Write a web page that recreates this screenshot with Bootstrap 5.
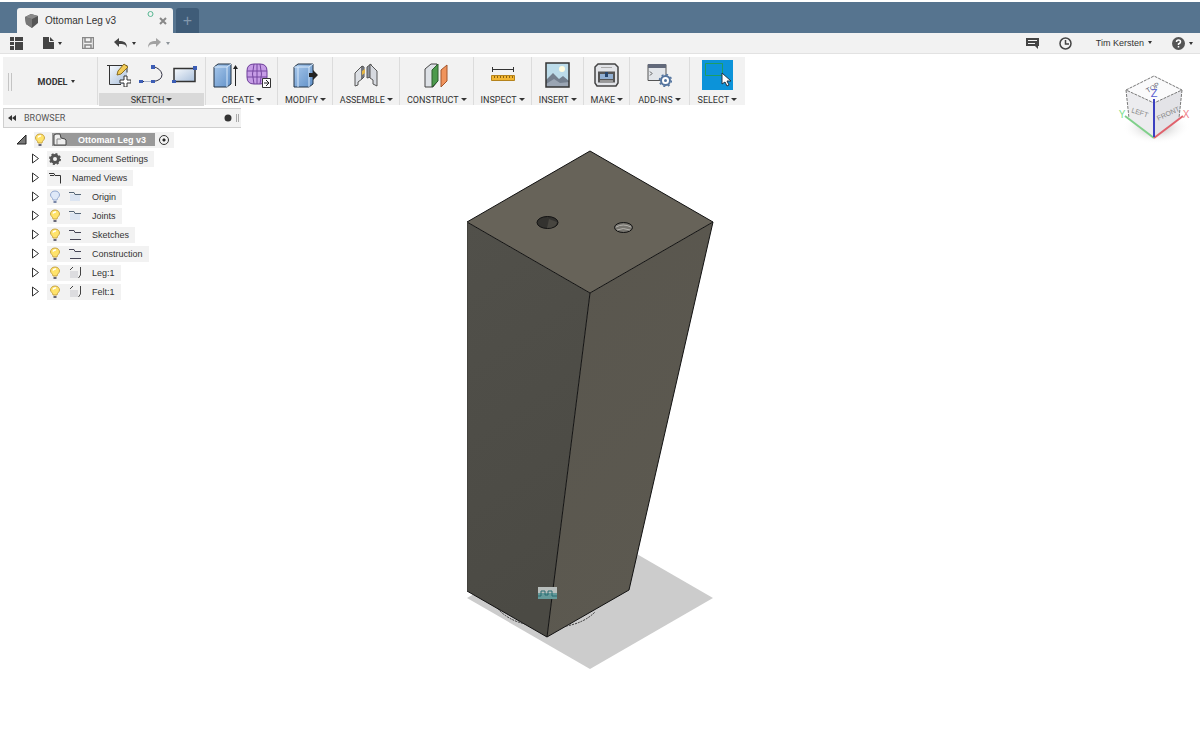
<!DOCTYPE html>
<html lang="en">
<head>
<meta charset="utf-8">
<meta name="viewport" content="width=device-width, initial-scale=1">
<title>Ottoman Leg v3</title>
<link href="https://cdn.jsdelivr.net/npm/bootstrap@5.3.0/dist/css/bootstrap.min.css" rel="stylesheet">
<style>
  body { font: 9px/12px "Liberation Sans", Arial, sans-serif; color: #333; background: #fff; }
  button { border: 0; background: none; padding: 0; color: inherit; font: inherit; }
  svg { display: block; flex: none; }
  .tabstrip { background: #56748f; height: 31px; margin-top: 2px; padding-left: 17px; gap: 3px; }
  .doc-tab { background: #f2f2f2; width: 156px; height: 25px; padding: 0 6px 0 8px; border-radius: 3px 3px 0 0; font-size: 10px; }
  .doc-name { margin-left: 6px; }
  .new-tab { background: #3f5c78; color: #8298ad; width: 23px; height: 25px; border-radius: 3px 3px 0 0; font-size: 16px; }
  .appbar { background: #f2f2f2; border-bottom: 1px solid #e2e2e2; height: 21px; padding: 0 7px 0 10px; }
  .drop::after { content: ""; display: inline-block; flex: none; border: 2px solid transparent; border-top: 3px solid currentColor; border-bottom: 0; margin-left: 4px; vertical-align: 2px; }
  .ribbon { background: #f2f2f2; margin: 3px 0 0 3px; height: 48px; font-family: Roboto, sans-serif; }
  .tool-group { border-left: 1px solid #dcdcdc; padding: 0 6px 0 7px; }
  .tool-group:nth-last-child(-n+2) { padding: 0 8px; }
  .tool-group .drop::after { border-width: 3px 3px 0; margin-left: 2px; }
  .tool-icons { height: 36px; }
  .tool-group > .drop { padding-top: 1px; }
  .tool-group.active { padding: 0 1px; }
  .tool-group.active .tool-icons { padding-left: 8px; padding-right: 7px; }
  .tool-group.active .tool-label { background: #d9d9d9; }
  .workspace { width: 94px; padding: 2px 0 0 5px; }
  .grip { width: 4px; height: 18px; border: solid #c4c4c4; border-width: 0 1px; }
  .select-tool { background: #0c93d9; width: 31px; height: 30px; }
  .browser { width: 238px; margin: 3px 0 0 3px; }
  .browser-head { height: 20px; background: #f2f2f2; border: 1px solid #cfcfcf; border-right: 0; padding: 0 1px 0 4px; color: #555; font-family: Roboto, sans-serif; }
  .tree { padding-top: 2px; }
  .tree li { height: 19px; padding-left: 28px; }
  .tree li.root { padding-left: 13px; }
  .chip { background: #f2f2f2; height: 16px; padding: 0 6px 0 2px; gap: 11px; margin-left: 7px; }
  .chip .bulb { margin-right: -3px; }
  .root .chip { gap: 6px; padding: 0 5px 0 0; }
  .root .bulb { margin: 0; }
  .root-name { background: #999; color: #fff; font-weight: bold; height: 13px; padding: 0 9px 0 1px; gap: 11px; }
  .activate { appearance: none; width: 10px; height: 10px; margin: 0 0 0 -2px; border: 1px solid #333; border-radius: 50%; background: radial-gradient(#222 0 1px, transparent 2px); }
  .viewcube { top: 16px; right: 6px; }
</style>
</head>
<body class="min-vh-100 d-flex flex-column overflow-hidden">

<svg width="0" height="0" class="position-absolute" aria-hidden="true">
  <defs>
    <linearGradient id="blue" x2="1" y2="1"><stop stop-color="#a9c9ec"/><stop offset="1" stop-color="#5f8fc7"/></linearGradient>
    <linearGradient id="steel" y2="1"><stop stop-color="#f7fafd"/><stop offset="1" stop-color="#a9bfdb"/></linearGradient>
    <symbol id="arrow" viewBox="0 0 9 11"><path d="M1.500 1v9L7.500 5.500z" fill="#fff" stroke="#333"/></symbol>
    <symbol id="bulb" viewBox="0 0 12 14"><path d="M6 1C3 1 1.500 3 1.500 5 1.500 7 4 8 4 10h4c0-2 2.500-3 2.500-5C10.500 3 9 1 6 1z" fill="#ffe36b" stroke="#c9a545"/><path d="M4 4.500Q5 2.500 7 3" stroke="#fff" stroke-width="1.500" fill="none"/><path d="M4.500 11h3v2h-3z" fill="#667"/></symbol>
    <symbol id="bulb-off" viewBox="0 0 12 14"><path d="M6 1C3 1 1.500 3 1.500 5 1.500 7 4 8 4 10h4c0-2 2.500-3 2.500-5C10.500 3 9 1 6 1z" fill="#dfe9f8" stroke="#94a9d0"/><path d="M4.500 11h3v2h-3z" fill="#7886a8"/></symbol>
    <symbol id="folder" viewBox="0 0 12 12"><path d="M1 3h10v8H1z" fill="#e9ebee"/><path d="M0 1.500h5l1 2h6M1 10.500h11" fill="none" stroke="#445"/></symbol>
    <symbol id="folder-off" viewBox="0 0 12 12"><path d="M1 3h10v7H1z" fill="#dce5f2"/><path d="M0 1.500h5l1 2h6" fill="none" stroke="#567"/></symbol>
    <symbol id="body" viewBox="0 0 12 13"><path d="M1 5h8v7H1z" fill="#dcdcdf"/><path d="M1 4l3-3M11.500 1v8l-2 3" fill="none" stroke="#444"/></symbol>
  </defs>
</svg>

<header>
  <div class="tabstrip d-flex align-items-end">
    <div class="doc-tab d-flex align-items-center">
      <svg width="14" height="14" viewBox="0 0 14 14"><path d="M0 3L6 0l7 2v7l-6 5-6-4z" fill="#555"/><path d="M0 3l7 2v9l-6-4z" fill="#777"/><path d="M0 3l6-3 7 2-6 3z" fill="#8a8a8a"/></svg>
      <span class="doc-name flex-grow-1">Ottoman Leg v3</span>
      <svg class="align-self-start" width="9" height="9"><circle cx="4.500" cy="6" r="2.500" fill="none" stroke="#58b793"/></svg>
      <button class="ms-1" aria-label="Close tab"><svg width="8" height="8"><path d="M1 1l6 6M7 1L1 7" stroke="#888" stroke-width="2"/></svg></button>
    </div>
    <button class="new-tab" aria-label="New tab">+</button>
  </div>

  <div class="appbar d-flex align-items-center">
    <button aria-label="Data panel"><svg width="13" height="13" fill="#444"><path d="M0 0h4v4H0zM5 0h8v4H5zM0 5h4v3H0zM0 9h4v4H0zM5 5h8v8H5z"/></svg></button>
    <button class="drop d-flex align-items-center ms-3 ps-1" aria-label="File"><svg width="11" height="12" fill="#444"><path d="M0 0h6v5h5v7H0zM7 0l4 4H7z"/></svg></button>
    <button class="ms-3 ps-1" aria-label="Save"><svg width="12" height="12"><path d="M.5.5h11v11H.5zM3 1v4h6V1M3 11V8h6v3" fill="none" stroke="#888" stroke-width="1.500"/></svg></button>
    <button class="drop d-flex align-items-center ms-3 ps-1" aria-label="Undo"><svg width="14" height="10"><path d="M0 4l5-4v3c5 0 8 1 8 7-1-4-4-4-8-4v3z" fill="#444"/></svg></button>
    <button class="drop d-flex align-items-center ms-2 ps-1 text-secondary opacity-75" aria-label="Redo"><svg width="14" height="10"><path d="M13 4L8 0v3C3 3 0 4 0 10c1-4 4-4 8-4v3z" fill="#888"/></svg></button>
    <div class="ms-auto d-flex align-items-center">
      <button aria-label="Comments"><svg width="13" height="11"><path d="M0 0h13v8h-1v3L9 8H0z" fill="#444"/><path d="M2 2.500h9M2 5.500h7" stroke="#f2f2f2"/></svg></button>
      <button class="ms-3 ps-1" aria-label="Job status"><svg width="13" height="13" fill="none" stroke="#444"><circle cx="6.500" cy="6.500" r="5.500" stroke-width="1.500"/><path d="M6.500 3v4H10" stroke-width="1.500"/></svg></button>
      <button class="drop ms-3 ps-2">Tim Kersten</button>
      <button class="drop d-flex align-items-center ms-3 ps-1" aria-label="Help"><svg width="13" height="13"><circle cx="6.500" cy="6.500" r="6.500" fill="#555"/><path d="M4.500 5q0-2 2-2t2 2q0 1-2 2v1M6.500 9v1.500" fill="none" stroke="#fff" stroke-width="1.500"/></svg></button>
    </div>
  </div>
</header>

<main class="flex-grow-1 position-relative">
  <svg class="position-absolute top-0 start-0 w-100 h-100" viewBox="0 54 1200 692" role="img" aria-label="Tapered leg model">
    <defs>
      <linearGradient id="lf" x1=".2" x2="0" y1="1" y2="0"><stop stop-color="#4b4a44"/><stop offset="1" stop-color="#51504a"/></linearGradient>
      <linearGradient id="rf" x2=".4" y2="1"><stop stop-color="#59564e"/><stop offset="1" stop-color="#5c5950"/></linearGradient>
    </defs>
    <path d="M590 527l123 71-123 71-123-71z" fill="#ccc"/>
    <path d="M467 222l123 71-43 344-80-46z" fill="url(#lf)"/>
    <path d="M590 293l123-71-84 368-82 47z" fill="url(#rf)"/>
    <path d="M467 222l123-71 123 71-123 71z" fill="#676359"/>
    <path d="M467 222l123-71 123 71-123 71zM590 293l-43 344M467 591l80 46 82-47 84-368" fill="none" stroke="#111" stroke-width="1"/>
    <path d="M467.500 222v369" stroke="#44433e"/>
    <path d="M498 609q10 11 27 15M566 626q18-3 29-14" fill="none" stroke="#333" stroke-dasharray="2 1"/>
    <ellipse cx="547.500" cy="222.500" rx="10.500" ry="6" fill="#33322f" stroke="#111"/>
    <path d="M547 228q9 0 10-6l-8-3z" fill="#484640"/>
    <ellipse cx="623.500" cy="227.500" rx="9" ry="5" fill="#77756f" stroke="#111"/>
    <path d="M616 227q7-4 15 0M617 230q6-3 13 0" fill="none" stroke="#b4b2ad"/>
    <path d="M538 587h19v6h-19z" fill="#b9bfbd"/><path d="M538 593h19v6h-19z" fill="#659a9a"/>
    <path d="M538 596h3v-5h4v4h3v-4h4v5h5" fill="none" stroke="#296b70"/>
  </svg>

  <svg class="viewcube position-absolute" width="76" height="76" viewBox="1118 70 76 76" role="img" aria-label="View cube">
    <defs><radialGradient id="sh"><stop stop-color="#aaa"/><stop offset="1" stop-color="#fff" stop-opacity="0"/></radialGradient></defs>
    <ellipse cx="1156" cy="127" rx="34" ry="17" fill="url(#sh)"/>
    <path d="M1126 90l28 13v35l-24-19z" fill="#ececef"/><path d="M1154 103l28-13-3 29-25 19z" fill="#e3e3e7"/>
    <path d="M1126 90l28-14 28 14-28 13z" fill="#fafafb"/>
    <path d="M1126 90l28-14 28 14-28 13zM1126 90l3 28M1182 90l-3 28" fill="none" stroke="#777" stroke-dasharray="3 1"/>
    <path d="M1125 116l29 22" stroke="#7fd08a" stroke-width="2"/><path d="M1154 138l29-22" stroke="#e0626c" stroke-width="2"/>
    <path d="M1154 99v38" stroke="#3a3fc0" stroke-width="2"/>
    <g font-family="Liberation Sans, sans-serif" text-anchor="middle">
      <text x="1140" y="115" font-size="7" fill="#888" transform="rotate(18 1140 112)">LEFT</text>
      <text x="1168" y="116" font-size="7" fill="#888" transform="rotate(-25 1168 113)">FRONT</text>
      <text x="1153" y="90" font-size="7" fill="#667" transform="rotate(-30 1153 88)">TOP</text>
      <text x="1154" y="97" font-size="11" fill="#5a5fd0">Z</text>
      <text x="1122" y="118" font-size="10" fill="#7ddf8c">Y</text>
      <text x="1186" y="118" font-size="10" fill="#f08088">X</text>
    </g>
  </svg>

  <div class="ribbon d-inline-flex position-relative">
    <div class="workspace d-flex align-items-center">
      <span class="grip"></span>
      <button class="drop fw-bold mx-auto ps-1">MODEL</button>
    </div>
    <section class="tool-group active">
      <div class="tool-icons d-flex justify-content-between align-items-center gap-2">
        <button aria-label="Create sketch"><svg width="24" height="24" viewBox="0 0 24 24"><path d="M2 3h18v18H2z" fill="url(#steel)"/><path d="M0 2.500h20v7M2.500 2v19.500H14" fill="none" stroke="#333"/><path d="M10 12l1-4 6-7 4 3-7 7z" fill="#f3cc58" stroke="#8a6d20"/><path d="M17 13h3v4h4v3h-4v4h-3v-4h-4v-3h4z" fill="#fff" stroke="#333"/></svg></button>
        <button aria-label="Line"><svg width="25" height="24" viewBox="0 0 25 24"><path d="M3 18.500h11q9-1 9-7-1-6-9-8" fill="none" stroke="#334"/><path d="M5 18.500h7" stroke="#a9b4cc"/><path d="M0 17h4v3H0zM12 17h4v3h-4zM12 2h4v4h-4z" fill="#3c5db5"/></svg></button>
        <button aria-label="Rectangle"><svg width="25" height="24" viewBox="0 0 25 24"><path d="M2 5.500h21v13H2z" fill="url(#steel)" stroke="#333" stroke-width="1.500"/><path d="M0 17h4v3H0zM21 3h4v4h-4z" fill="#3c5db5"/></svg></button>
      </div>
      <button class="tool-label drop w-100">SKETCH</button>
    </section>
    <section class="tool-group text-center">
      <div class="tool-icons d-flex align-items-center gap-2">
        <button aria-label="Extrude"><svg width="25" height="25" viewBox="0 0 25 25"><path d="M1 4l4-3h13v20l-4 3H1z" fill="url(#blue)" stroke="#234"/><path d="M1 4h13l4-3M14 4v20" fill="none" stroke="#d7e8fa"/><path d="M22.500 23V4" stroke="#222"/><path d="M20 6l2.500-4L25 6z" fill="#222"/></svg></button>
        <button aria-label="Create form"><svg width="25" height="25" viewBox="0 0 25 25"><path d="M1 8Q1 1 8 1h6q7 0 7 7v6q0 7-7 7H8q-7 0-7-7z" fill="#c69ce6" stroke="#6c3d99"/><path d="M1 8h20M1 14h20M8 1q-3 10 0 20M14 1q3 10 0 20M11 1v20" fill="none" stroke="#7446a0"/><path d="M16.500 15.500h8v9h-8z" fill="#fff" stroke="#333"/><path d="M18 20h4M20 17l3 3-3 3" fill="none" stroke="#222"/></svg></button>
      </div>
      <button class="drop">CREATE</button>
    </section>
    <section class="tool-group text-center">
      <div class="tool-icons d-flex align-items-center justify-content-center"><button aria-label="Press pull"><svg width="25" height="25" viewBox="0 0 25 25"><path d="M1 4l4-3h15v20l-4 3H1z" fill="url(#blue)" stroke="#234"/><path d="M1 4h15l4-3M16 4v20M5 4v20" fill="none" stroke="#d7e8fa"/><path d="M16 10h4V7l5 5-5 5v-3h-4z" fill="#222"/></svg></button></div>
      <button class="drop">MODIFY</button>
    </section>
    <section class="tool-group text-center">
      <div class="tool-icons d-flex align-items-center justify-content-center"><button aria-label="Joint"><svg width="24" height="24" viewBox="0 0 24 24"><path d="M1 10l7-7v13l-4 3v3l-3 1z" fill="#dcdfe4" stroke="#555"/><path d="M8 3l2 1v10l-2 2z" fill="#8d939e" stroke="#555"/><path d="M13 4l4-3v13l-4 1z" fill="#8d939e" stroke="#555"/><path d="M16 1l7 7v15l-4-2v-4l-3-2z" fill="#d6d9df" stroke="#555"/><path d="M8 8l3-2v4l-3 2z" fill="#e4b545"/></svg></button></div>
      <button class="drop">ASSEMBLE</button>
    </section>
    <section class="tool-group text-center">
      <div class="tool-icons d-flex align-items-center justify-content-center"><button aria-label="Offset plane"><svg width="25" height="25" viewBox="0 0 25 25"><path d="M1 6l6-5h6v18l-4 5H1z" fill="#dde1e6" stroke="#444"/><path d="M8 7l6-6v17l-6 6z" fill="#4c9a4c" stroke="#2d5d2d"/><path d="M17 7l6-5v16l-6 6z" fill="#f0945c" stroke="#a3542a"/></svg></button></div>
      <button class="drop">CONSTRUCT</button>
    </section>
    <section class="tool-group text-center">
      <div class="tool-icons d-flex align-items-center justify-content-center"><button aria-label="Measure"><svg width="24" height="24" viewBox="0 0 24 24"><path d="M1 6.500h22M1.500 4v5M22.500 4v5" stroke="#333"/><path d="M.5 12.500h23v5H.5z" fill="#f2b632" stroke="#b5831c"/><path d="M3.500 13v2M6.500 13v2M9.500 13v2M12.500 13v2M15.500 13v2M18.500 13v2M21.500 13v2" stroke="#8a6210"/></svg></button></div>
      <button class="drop">INSPECT</button>
    </section>
    <section class="tool-group text-center">
      <div class="tool-icons d-flex align-items-center justify-content-center"><button aria-label="Insert decal"><svg width="25" height="26" viewBox="0 0 25 26"><path d="M1 1h23v24H1z" fill="#bcdcea"/><circle cx="17" cy="7" r="3" fill="#fffce0"/><path d="M1 18l7-7 6 6 4-3 6 5v6H1z" fill="#737f8e"/><path d="M1 22l8-5 6 4 9-1v5H1z" fill="#9aa5b3"/><path d="M1 1h23v24H1z" fill="none" stroke="#333" stroke-width="1.500"/></svg></button></div>
      <button class="drop">INSERT</button>
    </section>
    <section class="tool-group text-center">
      <div class="tool-icons d-flex align-items-center justify-content-center"><button aria-label="3D print"><svg width="25" height="24" viewBox="0 0 25 24"><path d="M1 4l3-3h17l3 3v16l-2 3H3l-2-3z" fill="#e2e4e8" stroke="#444" stroke-width="1.500"/><path d="M4 8.500h17v11H4z" fill="#555"/><path d="M6 11h13v5H6z" fill="#91afd2"/><path d="M11 9h3v5h-3z" fill="#26466f"/><path d="M7 4.500h11" stroke="#aaa"/><path d="M6 18h13" stroke="#ddd"/></svg></button></div>
      <button class="drop">MAKE</button>
    </section>
    <section class="tool-group text-center">
      <div class="tool-icons d-flex align-items-center justify-content-center"><button aria-label="Scripts and add-ins"><svg width="25" height="24" viewBox="0 0 25 24"><path d="M1 1.500h18v16H1z" fill="#e3e6ea" stroke="#555"/><path d="M1 1h18v4H1z" fill="#62697a"/><path d="M3 8.500l2 2-2 2" fill="none" stroke="#555"/><circle cx="18.500" cy="17.500" r="4.500" fill="#fff" stroke="#55759f" stroke-width="2"/><circle cx="18.500" cy="17.500" r="6" fill="none" stroke="#55759f" stroke-width="1.500" stroke-dasharray="2 2.700"/><circle cx="18.500" cy="17.500" r="1.500" fill="#55759f"/></svg></button></div>
      <button class="drop">ADD-INS</button>
    </section>
    <section class="tool-group text-center">
      <div class="tool-icons d-flex align-items-center justify-content-center"><button class="select-tool" aria-label="Select"><svg width="31" height="30" viewBox="0 0 31 30"><path d="M3.500 3.500h17v12h-17z" fill="none" stroke="#1f9d63"/><path d="M20 13v11l3-2 2 4 2-1-2-4h4z" fill="#fff" stroke="#234"/></svg></button></div>
      <button class="drop">SELECT</button>
    </section>
  </div>

  <aside class="browser position-relative">
    <div class="browser-head d-flex align-items-center">
      <button aria-label="Collapse browser"><svg width="8" height="6" fill="#333"><path d="M4 0v6L0 3zM8 0v6L4 3z"/></svg></button>
      <span class="ms-2 me-auto">BROWSER</span>
      <svg width="18" height="10"><circle cx="6" cy="5" r="3.500" fill="#333"/><path d="M14.500 1v8M16.500 1v8" stroke="#aaa"/></svg>
    </div>
    <ul class="tree list-unstyled mb-0">
      <li class="root d-flex align-items-center">
        <svg width="11" height="11"><path d="M10 1v9H1z" fill="#777" stroke="#222"/></svg>
        <div class="chip d-flex align-items-center">
          <svg class="bulb" width="12" height="14"><use href="#bulb"/></svg>
          <div class="root-name d-flex align-items-center"><svg width="14" height="13"><path d="M1 2l2-1h4l1 4 4 1 1 1v5H1z" fill="#eee" stroke="#444"/><path d="M4 12V6h4" fill="none" stroke="#888"/></svg>Ottoman Leg v3</div>
          <input class="activate" type="radio" checked aria-label="Activate component">
        </div>
      </li>
      <li class="d-flex align-items-center"><svg width="9" height="11"><use href="#arrow"/></svg><div class="chip d-flex align-items-center"><svg width="12" height="12"><circle cx="6" cy="6" r="3.500" fill="none" stroke="#555" stroke-width="3"/><circle cx="6" cy="6" r="5" fill="none" stroke="#555" stroke-width="2" stroke-dasharray="2 1.900"/></svg>Document Settings</div></li>
      <li class="d-flex align-items-center"><svg width="9" height="11"><use href="#arrow"/></svg><div class="chip d-flex align-items-center"><svg width="12" height="12"><path d="M0 1.500h5l1 2h5.500v8M1 3.500h4" fill="none" stroke="#333"/></svg>Named Views</div></li>
      <li class="d-flex align-items-center"><svg width="9" height="11"><use href="#arrow"/></svg><div class="chip d-flex align-items-center"><svg class="bulb" width="12" height="14"><use href="#bulb-off"/></svg><svg width="12" height="12"><use href="#folder-off"/></svg>Origin</div></li>
      <li class="d-flex align-items-center"><svg width="9" height="11"><use href="#arrow"/></svg><div class="chip d-flex align-items-center"><svg class="bulb" width="12" height="14"><use href="#bulb"/></svg><svg width="12" height="12"><use href="#folder-off"/></svg>Joints</div></li>
      <li class="d-flex align-items-center"><svg width="9" height="11"><use href="#arrow"/></svg><div class="chip d-flex align-items-center"><svg class="bulb" width="12" height="14"><use href="#bulb"/></svg><svg width="12" height="12"><use href="#folder"/></svg>Sketches</div></li>
      <li class="d-flex align-items-center"><svg width="9" height="11"><use href="#arrow"/></svg><div class="chip d-flex align-items-center"><svg class="bulb" width="12" height="14"><use href="#bulb"/></svg><svg width="12" height="12"><use href="#folder"/></svg>Construction</div></li>
      <li class="d-flex align-items-center"><svg width="9" height="11"><use href="#arrow"/></svg><div class="chip d-flex align-items-center"><svg class="bulb" width="12" height="14"><use href="#bulb"/></svg><svg width="12" height="13"><use href="#body"/></svg>Leg:1</div></li>
      <li class="d-flex align-items-center"><svg width="9" height="11"><use href="#arrow"/></svg><div class="chip d-flex align-items-center"><svg class="bulb" width="12" height="14"><use href="#bulb"/></svg><svg width="12" height="13"><use href="#body"/></svg>Felt:1</div></li>
    </ul>
  </aside>
</main>
<script src="https://cdn.jsdelivr.net/npm/bootstrap@5.3.0/dist/js/bootstrap.bundle.min.js"></script>
</body>
</html>
